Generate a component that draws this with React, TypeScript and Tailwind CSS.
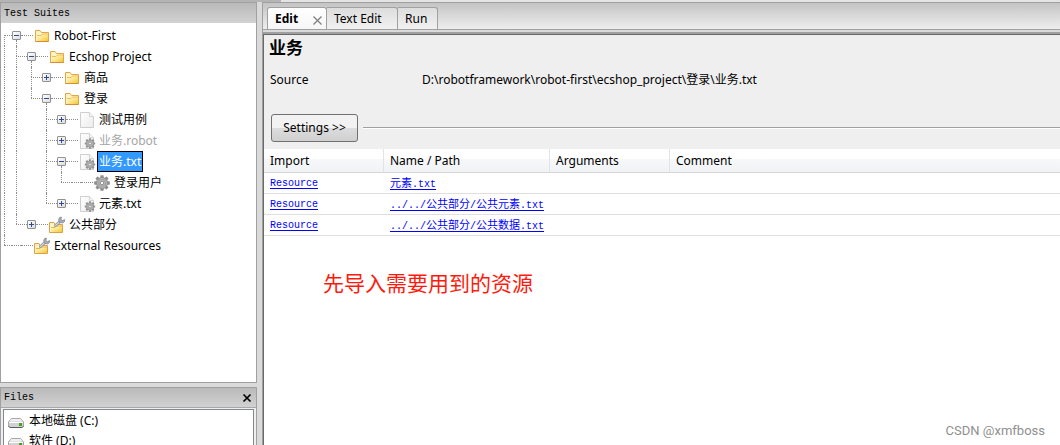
import { useState } from "react";

type IconKind = "folder" | "folderTool" | "page" | "pageGear" | "gear";

interface Node {
  label: string;
  icon: IconKind;
  muted?: boolean;
  selected?: boolean;
  collapsed?: boolean;
  expandable?: boolean;
  children?: Node[];
}

const tree: Node[] = [
  {
    label: "Robot-First",
    icon: "folder",
    expandable: true,
    children: [
      {
        label: "Ecshop Project",
        icon: "folder",
        expandable: true,
        children: [
          { label: "商品", icon: "folder", expandable: true, collapsed: true },
          {
            label: "登录",
            icon: "folder",
            expandable: true,
            children: [
              { label: "测试用例", icon: "page", expandable: true, collapsed: true },
              { label: "业务.robot", icon: "pageGear", expandable: true, collapsed: true, muted: true },
              {
                label: "业务.txt",
                icon: "pageGear",
                expandable: true,
                selected: true,
                children: [{ label: "登录用户", icon: "gear" }],
              },
              { label: "元素.txt", icon: "pageGear", expandable: true, collapsed: true },
            ],
          },
        ],
      },
      { label: "公共部分", icon: "folderTool", expandable: true, collapsed: true },
    ],
  },
  { label: "External Resources", icon: "folderTool" },
];

const imports = ["元素.txt", "../../公共部分/公共元素.txt", "../../公共部分/公共数据.txt"];

const teeth = [0, 45, 90, 135, 180, 225, 270, 315];

function GearShape({ cx, cy, scale }: { cx: number; cy: number; scale: number }) {
  return (
    <g transform={`translate(${cx} ${cy}) scale(${scale})`}>
      {teeth.map((a) => (
        <rect key={a} x="-1.7" y="-8" width="3.4" height="4" rx="0.6" fill="#8f8f8f" transform={`rotate(${a})`} />
      ))}
      <circle r="5.6" fill="#b9b9b9" stroke="#8c8c8c" strokeWidth="1" />
      <circle r="3.6" fill="none" stroke="#a2a2a2" strokeWidth="1.2" />
      <circle r="1.8" fill="#ffffff" stroke="#8a8a8a" strokeWidth="1" />
    </g>
  );
}

function NodeIcon({ kind }: { kind: IconKind }) {
  return (
    <svg width="16" height="16" viewBox="0 0 16 16" aria-hidden="true" className="shrink-0 overflow-visible">
      <defs>
        <linearGradient id="folderFill" x1="0" y1="0" x2="1" y2="1">
          <stop offset="0" stopColor="#fffbe6" />
          <stop offset="0.5" stopColor="#fce58c" />
          <stop offset="1" stopColor="#f3c82c" />
        </linearGradient>
        <linearGradient id="pageFill" x1="0" y1="0" x2="1" y2="1">
          <stop offset="0" stopColor="#ffffff" />
          <stop offset="1" stopColor="#ececec" />
        </linearGradient>
      </defs>
      {kind === "folder" && (
        <>
          <path d="M1.5 13V2.5H6L7.5 4.5H14.5V13.5H1.5Z" fill="#fff3bf" stroke="#e2a64a" />
          <path d="M3 12.5V7.5H7L8.5 6H14V13H3Z" fill="url(#folderFill)" />
          <path d="M3 7.5H7L8.5 6H14" fill="none" stroke="#f0bd50" />
          <path d="M1.5 13.5H14.5" stroke="#d98c35" />
        </>
      )}
      {kind === "folderTool" && (
        <>
          <path d="M.5 15.5V5.5H5L6 7.5H13.5V15.5Z" fill="#fff3bf" stroke="#dda044" />
          <path d="M2 15V10.5H6L7.5 9H13V15Z" fill="url(#folderFill)" />
          <path d="M2 10.5H6L7.5 9H13" fill="none" stroke="#e9b34c" />
          <path d="M6.5 8.5L11.5 4" stroke="#858a92" strokeWidth="2.8" strokeLinecap="round" />
          <path d="M6.5 8.5L11.5 4" stroke="#d7dade" strokeWidth="1.2" strokeLinecap="round" />
          <path d="M12.6 .3L11.8 2.4L13.4 3.6L15.6 2.6V4.4L13.6 6L10.6 5.4L9.6 2.4L10.8 .3Z" fill="#a9b0b9" stroke="#777e88" strokeWidth=".7" />
        </>
      )}
      {(kind === "page" || kind === "pageGear") && (
        <>
          <path d="M1.5 .5H10.5L14.5 4.5V15.5H1.5Z" fill="url(#pageFill)" stroke="#cfcfcf" />
          <path d="M10.5 .5V4.5H14.5" fill="#f6f6f6" stroke="#d4d4d4" />
        </>
      )}
      {kind === "pageGear" && <GearShape cx={11} cy={10.5} scale={0.65} />}
      {kind === "gear" && <GearShape cx={8} cy={8} scale={0.98} />}
    </svg>
  );
}

const dotsLeft = "border-l border-dotted border-[#8c8c8c]";
const dotsTop = "border-t border-dotted border-[#8c8c8c]";

interface RowProps {
  node: Node;
  trail: boolean[];
  first: boolean;
  last: boolean;
}

function TreeRow({ node, trail, first, last }: RowProps) {
  const [open, setOpen] = useState(!node.collapsed);
  const depth = trail.length;
  const color = node.selected
    ? "border-black bg-[#3399ff] text-white"
    : node.muted
      ? "border-transparent text-[#a6a6a6]"
      : "border-transparent text-black";
  return (
    <li>
      <div className="flex h-[21px] items-center">
        {trail.map((line, i) => (
          <span key={i} className={`h-full shrink-0 ${i === 0 ? "w-3" : "w-[15px]"} ${line ? dotsLeft : ""}`} />
        ))}
        <span className={`flex h-full shrink-0 flex-col ${depth === 0 ? "w-2" : "w-[11px]"}`}>
          <span className={`h-[10px] ${first && depth === 0 ? "" : dotsLeft}`} />
          <span className={`flex-1 ${dotsTop} ${last ? "" : "border-l"}`} />
        </span>
        {node.expandable ? (
          <span className="flex h-full w-[9px] shrink-0 flex-col items-center">
            <span className="flex-1" />
            <button
              type="button"
              aria-label={`${open ? "Collapse" : "Expand"} ${node.label}`}
              onClick={() => setOpen(!open)}
              className="size-[9px] shrink-0 rounded-[1px] border border-[#919191] bg-linear-to-br from-white to-[#dcdcdc]"
            >
              <svg width="7" height="7" viewBox="0 0 7 7" className="block" aria-hidden="true">
                <path d={open ? "M1 3.5H6" : "M1 3.5H6M3.5 1V6"} stroke="#2b4a9b" />
              </svg>
            </button>
            <span className="flex w-px flex-1">
              {open && <span className={dotsLeft} />}
            </span>
          </span>
        ) : (
          <span className={`h-px w-[9px] shrink-0 ${dotsTop}`} />
        )}
        <span className={`mr-px h-px w-3 shrink-0 ${dotsTop}`} />
        <NodeIcon kind={node.icon} />
        <span className={`ml-[2px] h-[21px] border px-px text-[12px] leading-[19px] whitespace-nowrap ${color}`}>
          {node.label}
        </span>
      </div>
      {open && node.children && (
        <ul>
          {node.children.map((child, i) => (
            <TreeRow
              key={child.label}
              node={child}
              trail={[...trail, !last]}
              first={i === 0}
              last={i === node.children!.length - 1}
            />
          ))}
        </ul>
      )}
    </li>
  );
}

function DriveIcon() {
  return (
    <svg width="16" height="10" viewBox="0 0 16 10" aria-hidden="true" className="mt-1 shrink-0">
      <path d="M3.5 .5H12.5L15.5 4V8.5L14.5 9.5H1.5L.5 8.5V4Z" fill="#d2d2d6" stroke="#a7a7a7" />
      <path d="M3.5 1H12.5L14.5 3.5H1.5Z" fill="#f0f0f0" />
      <path d="M1 4.5H15" stroke="#ffffff" />
      <path d="M.5 8L2 9.5H14L15.5 8" fill="none" stroke="#5c5c5c" />
      <rect x="11" y="5" width="3" height="3" fill="#45a51c" />
    </svg>
  );
}

function PathText({ text }: { text: string }) {
  return (
    <>
      {text.split(/([\u4e00-\u9fff]+)/).map((part, i) => (
        <span key={i} className={i % 2 ? "text-[11px]" : ""}>
          {part}
        </span>
      ))}
    </>
  );
}

const caption =
  "flex items-center justify-between bg-linear-to-b from-[#b9b9b9] to-[#d2d2d2] px-[3px] font-['Liberation_Mono','Noto_Sans_CJK_SC',monospace] text-[10px] text-black";
const link =
  "block h-5 pt-px font-['Liberation_Mono','Noto_Sans_CJK_SC',monospace] text-[10px] leading-5 text-[#0000ff] underline underline-offset-2";

export default function App() {
  return (
    <div className="relative flex h-screen flex-col overflow-hidden bg-[#dadada] font-['Noto_Sans','Noto_Sans_CJK_SC',sans-serif] text-[12px] text-black">
      <div className="flex h-[2px] shrink-0 bg-[#e4e4e4]">
        <div className="w-[281px] bg-[#b4b4b4]" />
      </div>
      <div className="flex min-h-0 flex-1">
        <aside className="flex w-[257px] shrink-0 flex-col gap-1">
          <section className="flex min-h-0 flex-1 flex-col border border-[#a0a0a0] bg-white">
            <h2 className={`h-5 shrink-0 ${caption}`}>Test Suites</h2>
            <ul className="mt-[2px] overflow-hidden pl-[3px]">
              {tree.map((n, i) => (
                <TreeRow key={n.label} node={n} trail={[]} first={i === 0} last={i === tree.length - 1} />
              ))}
            </ul>
          </section>
          <section className="flex h-[58px] shrink-0 flex-col border border-b-0 border-[#a0a0a0] bg-[#efefef]">
            <div className={`h-5 shrink-0 border-b border-[#a8a8a8] ${caption}`}>
              <h2>Files</h2>
              <button type="button" aria-label="Close files" className="mr-px">
                <svg width="10" height="10" viewBox="0 0 10 10" aria-hidden="true">
                  <path d="M1.5 1.5L8.5 8.5M8.5 1.5L1.5 8.5" stroke="#000" strokeWidth="1.7" />
                </svg>
              </button>
            </div>
            <ul className="mx-[2px] mt-px flex-1 overflow-hidden border border-b-0 border-[#828790] bg-white pt-px pl-1">
              {["本地磁盘 (C:)", "软件 (D:)"].map((d) => (
                <li key={d} className="flex h-5 items-center gap-[5px]">
                  <DriveIcon />
                  <span className="leading-5">{d}</span>
                </li>
              ))}
            </ul>
          </section>
        </aside>

        <main className="ml-[5px] flex min-w-0 flex-1 flex-col border-t border-l border-[#a0a0a0]">
          <nav className="flex h-[27px] shrink-0 items-end border-b border-[#a0a0a0] bg-linear-to-b from-[#c4c4c4] to-[#eeeeee] pl-1">
            <button
              type="button"
              className="flex h-[22px] w-[60px] items-center justify-between rounded-t-[3px] border border-b-0 border-[#a0a0a0] bg-linear-to-b from-white to-[#f6f6f6] pr-1 pl-[7px] font-bold"
            >
              Edit
              <svg width="9" height="9" viewBox="0 0 9 9" className="mt-1" aria-hidden="true">
                <path d="M.5 .5L8.5 8.5M8.5 .5L.5 8.5" stroke="#808080" strokeWidth="1.3" />
              </svg>
            </button>
            <button
              type="button"
              className="h-[22px] w-[71px] rounded-tr-[3px] border-t border-r border-[#a0a0a0] bg-linear-to-b from-[#dddddd] to-[#f1f1f1] pl-[7px] text-left"
            >
              Text Edit
            </button>
            <button
              type="button"
              className="h-[22px] w-10 rounded-tr-[3px] border-t border-r border-[#a0a0a0] bg-linear-to-b from-[#dddddd] to-[#f1f1f1] pl-[7px] text-left"
            >
              Run
            </button>
          </nav>
          <div className="mt-[2px] flex min-h-0 flex-1 flex-col border-t-2 border-[#a0a0a0]">
            <div className="flex min-h-0 flex-1 flex-col border-t border-l border-[#696969] bg-white">
              <header className="bg-[#efefef] pb-[7px]">
                <h1 className="pl-[5px] text-[17px] leading-[26px] font-bold">业务</h1>
                <dl className="mt-[9px] flex pl-[6px] leading-5">
                  <dt className="w-[152px] shrink-0">Source</dt>
                  <dd>D:\robotframework\robot-first\ecshop_project\登录\业务.txt</dd>
                </dl>
                <div className="mt-6 flex items-center gap-[5px] pl-[7px]">
                  <button
                    type="button"
                    className="h-7 w-[87px] rounded-[3px] border border-[#707070] bg-linear-to-b from-[#f2f2f2] from-50% via-[#dddddd] via-50% to-[#cfcfcf]"
                  >
                    Settings &gt;&gt;
                  </button>
                  <div className="h-[2px] flex-1 border-t border-[#a0a0a0] bg-white" />
                </div>
              </header>
              <table className="w-full table-fixed border-separate border-spacing-0 text-left">
                <colgroup>
                  <col className="w-[120px]" />
                  <col className="w-[166px]" />
                  <col className="w-[120px]" />
                  <col />
                </colgroup>
                <thead>
                  <tr className="bg-linear-to-b from-white from-40% via-[#f7f8fa] via-40% to-[#f1f2f4]">
                    {["Import", "Name / Path", "Arguments", "Comment"].map((h, i) => (
                      <th
                        key={h}
                        scope="col"
                        className={`border-b border-b-[#d5d5d5] p-0 pt-px pl-[6px] leading-[22px] font-normal ${i < 3 ? "border-r border-r-[#e2e3e5]" : ""}`}
                      >
                        {h}
                      </th>
                    ))}
                  </tr>
                </thead>
                <tbody>
                  {imports.map((path) => (
                    <tr key={path}>
                      <td className="border-b border-[#dfdfdf] p-0 pl-[6px]">
                        <a href="#resource" className={link}>Resource</a>
                      </td>
                      <td className="border-b border-[#dfdfdf] p-0 pl-[6px] whitespace-nowrap">
                        <a href="#path" className={link}>
                          <PathText text={path} />
                        </a>
                      </td>
                      <td className="border-b border-[#dfdfdf] p-0" />
                      <td className="border-b border-[#dfdfdf] p-0" />
                    </tr>
                  ))}
                </tbody>
              </table>
              <p className="mt-8 pl-[59px] font-['Noto_Sans_CJK_SC',sans-serif] text-[21px] leading-7 text-[#ff1a0d]">
                先导入需要用到的资源
              </p>
            </div>
          </div>
        </main>
      </div>
      <span className="absolute right-[15px] bottom-1 font-['Roboto',sans-serif] text-[13px] leading-5 text-[#8f8f8f]">
        CSDN @xmfboss
      </span>
    </div>
  );
}
